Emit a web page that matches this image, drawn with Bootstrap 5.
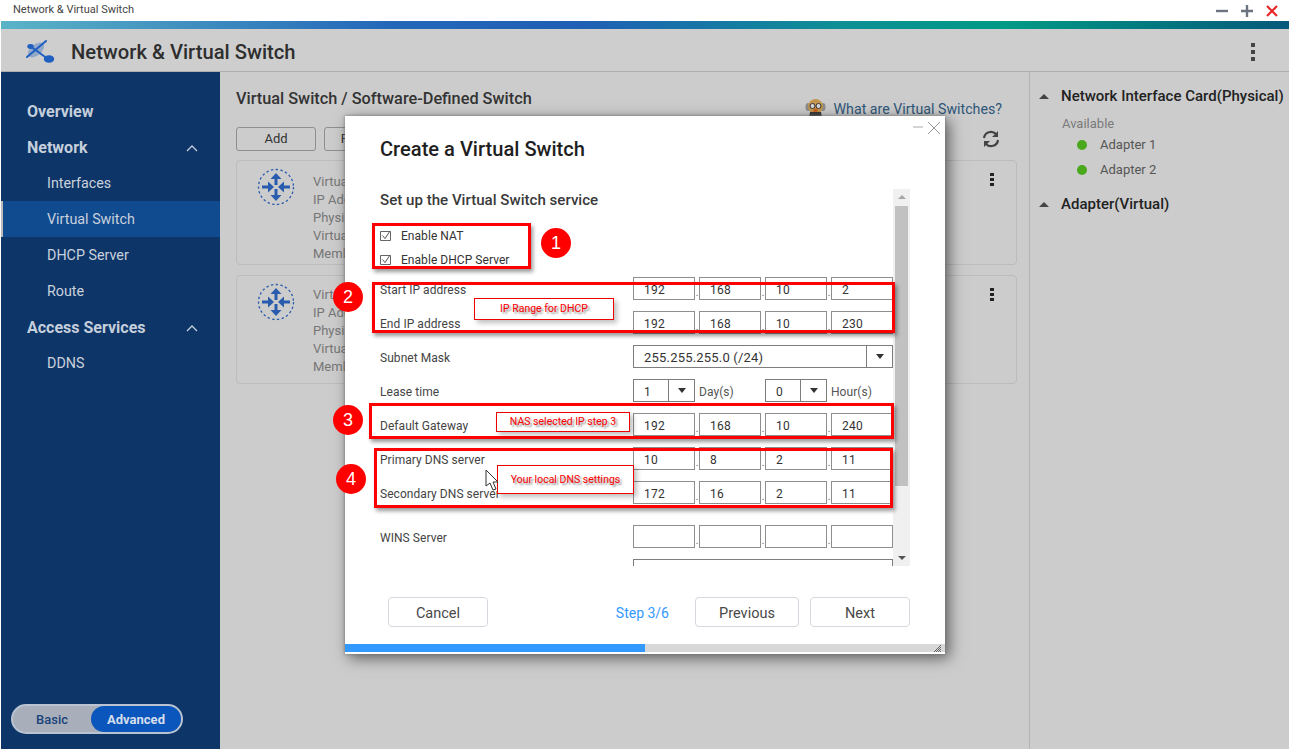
<!DOCTYPE html>
<html lang="en">
<head>
    <meta charset="UTF-8">
    <meta name="viewport" content="width=device-width, initial-scale=1.0">
    <title>Network &amp; Virtual Switch</title>
    <link href="https://cdn.jsdelivr.net/npm/bootstrap@5.3.0/dist/css/bootstrap.min.css" rel="stylesheet">
    <style>
body { font-family: Roboto, "Liberation Sans", sans-serif; background: #fff; overflow: hidden; }

/* window */
.app-window { width: 1288px; height: 749px; margin-left: 1px; position: relative; background: #ccc; }
.win-title { height: 21px; background: #fff; padding-left: 12px; font-size: 11px; color: #444; }
.win-ctrl { padding-right: 11px; gap: 13px; }
.color-strip { height: 8px; background: linear-gradient(90deg, #5ab4c6 0, #2467b9 30%, #1f5fb5 45%, #0e8f95 65%, #009a85 78%, #06597a 100%); }
.app-head { height: 43px; background: #cecece; border-bottom: 1px solid #adadad; padding-left: 25px; padding-right: 34px; padding-top: 3px; }
.app-head h1 { font-size: 20.2px; font-weight: 500; color: #2e2e2e; margin: 2px 0 0 16px; }
.app-body { height: 677px; }

/* sidebar */
.side-bar { width: 219px; background: #0d3568; padding-top: 21px; }
.side-item { height: 36px; padding-left: 26px; padding-right: 22px; font-size: 14.3px; color: #c9d1dc; display: flex; align-items: center; justify-content: space-between; }
.side-item.head { font-size: 16px; font-weight: 700; color: #c5cfdc; padding-top: 2px; }
.side-item.sub { padding-left: 46px; padding-top: 2px; }
.side-item.on { background: #104a8f; border-left: 2px solid #bbb; padding-left: 44px; }
.mode-switch { width: 172px; height: 30px; margin: 0 0 15px 10px; border-radius: 15px; background: #a9afba; border: 2px solid #b9c3d2; font-size: 13px; font-weight: 500; }
.mode-switch span { display: flex; align-items: center; justify-content: center; height: 100%; padding-top: 1px; }
.mode-basic { width: 78px; color: #1b4379; }
.mode-adv { flex: 1; background: #0a56bc; color: #d5dfed; border-radius: 15px; font-weight: 700; }

/* content */
.main-part { width: 810px; padding: 17px 12px 0 16px; border-right: 1px solid #b4b4b4; }
.main-part h2 { font-size: 16.3px; font-weight: 500; color: #333; margin: 0; line-height: 19px; }
.help-link { font-size: 14.2px; color: #2d5679; text-decoration: none; margin-right: 15px; margin-top: 10px; line-height: 18px; }
.tool-btn { width: 80px; height: 24px; border: 1px solid #8f8f8f; border-radius: 3px; font-size: 13px; color: #333; padding: 0; background: transparent; line-height: 22px; }
.sw-card { background: transparent; border: 1px solid #bcbcbc; border-radius: 4px; color: #767676; font-size: 13px; line-height: 18px; margin-bottom: 10px; padding: 7px 22px 0 20px; }
.sw-text { margin-left: 18px; padding-top: 5px; }
.sw-text.tight { padding-top: 3px; }

/* right panel */
.right-part { flex: 1; padding: 15px 0 0 9px; }
.panel-head { font-size: 15px; font-weight: 500; color: #222; line-height: 18px; white-space: nowrap; }
.tri { width: 0; height: 0; border-left: 5px solid transparent; border-right: 5px solid transparent; border-bottom: 5px solid #444; margin-right: 12px; }
.panel-note { font-size: 13px; color: #7a7a7a; margin: 11px 0 0 23px; line-height: 16px; }
.adapter { font-size: 13px; color: #555; height: 25px; padding-left: 38px; }
.adapter i { width: 10px; height: 10px; border-radius: 50%; background: #4aa81c; margin-right: 13px; }

/* dialog */
.wizard { position: absolute; left: 344px; top: 116px; width: 600px; height: 538px; background: #fff; box-shadow: 0 0 3px #777, 4px 4px 14px rgba(0,0,0,.55); display: flex; flex-direction: column; }
.wizard-ctrl { position: absolute; right: 4px; top: 5px; }
.wizard h3 { font-size: 20.1px; font-weight: 500; color: #1e1e1e; margin: 21px 0 0 35px; line-height: 24px; height: 52px; }
.scroll-wrap { height: 377px; margin-left: 35px; width: 530px; overflow: hidden; }
.form-pane { width: 513px; }
.form-pane h4 { font-size: 15.1px; font-weight: 500; color: #3a3a3a; line-height: 20px; margin: 1px 0 14px; }
.chk-row { height: 24px; font-size: 12px; color: #333; letter-spacing: .05px; }
.chk-row svg { margin-right: 10px; margin-bottom: 2px; }
.ip-row { height: 23px; margin-bottom: 11px; font-size: 12px; color: #444; letter-spacing: .05px; }
.ip-row label { width: 253px; flex: none; padding-top: 2px; }
.ip-cell { width: 62px; height: 23px; border: 1px solid #8e8e8e; border-radius: 0; padding: 2px 0 0 10px; font-size: 12px; color: #333; box-shadow: none; flex: none; letter-spacing: .2px; }
.ip-dot { width: 4px; font-size: 10px; color: #555; text-align: center; align-self: flex-end; line-height: 14px; }
.combo { height: 23px; border: 1px solid #7d7d7d; display: flex; align-items: center; font-size: 12px; color: #333; flex: none; letter-spacing: .2px; }
.combo span { flex: 1; padding: 2px 0 0 10px; }
.combo .wide-val { font-size: 13px; }
.combo b { width: 26px; height: 100%; border-left: 1px solid #7d7d7d; display: flex; align-items: center; justify-content: center; }
.combo b::after { content: ""; border-left: 4px solid transparent; border-right: 4px solid transparent; border-top: 5px solid #333; }
.unit-txt { font-size: 12px; color: #555; margin-left: 4px; padding-top: 2px; }
.fake-scroll { width: 17px; background: #f0f0f0; position: relative; flex: none; }
.fake-thumb { position: absolute; left: 2px; right: 2px; top: 17px; height: 280px; background: #c1c1c1; }
.fake-scroll::before, .fake-scroll::after { content: ""; position: absolute; left: 5px; border-left: 4px solid transparent; border-right: 4px solid transparent; }
.fake-scroll::before { top: 6px; border-bottom: 4px solid #a6a6a6; }
.fake-scroll::after { bottom: 6px; border-top: 4px solid #555; }
.wizard-foot { margin-top: 31px; padding: 0 35px 0 43px; }
.wiz-btn { height: 30px; width: 100px; font-size: 14.5px; color: #484848; border: 1px solid #d5d8de; border-radius: 4px; padding: 3px 0 0; background: #fff; }
.step-txt { font-size: 14px; color: #3399ff; margin-right: 26px; padding-top: 2px; }
.wizard .progress { height: 8px; border-radius: 0; background: #d8d8d8; margin-top: 17px; position: relative; }
.wizard .progress-bar { background: #3399ff; }
.grip { position: absolute; right: 3px; top: 0; }

/* annotations on top of the screenshot */
.note-box { position: absolute; border: 3px solid #f00; box-shadow: 2px 3px 4px rgba(0,0,0,.4); }
.note-num { position: absolute; width: 30px; height: 30px; border-radius: 50%; background: #f00; color: #fff; font-size: 18px; display: flex; align-items: center; justify-content: center; font-family: "Liberation Sans", sans-serif; }
.note-tag { position: absolute; background: #fff; border: 1px solid #e00; color: #f00; font-size: 10.5px; display: flex; align-items: center; justify-content: center; text-shadow: 2px 2px 2px rgba(0,0,0,.45); box-shadow: 3px 3px 5px rgba(0,0,0,.25); }
.mouse-ptr { position: absolute; left: 484px; top: 469px; }
    </style>
</head>
<body>

<svg width="0" height="0" class="position-absolute">
    <symbol id="routerIco" viewBox="0 0 38 38">
        <circle cx="19" cy="19" r="17.5" fill="none" stroke="#2a5cae" stroke-width="1.3" stroke-dasharray="2.4 2.4"/>
        <g fill="#2a5cae">
            <path d="M19 5l5.5 6h-4v6h-3v-6h-4zM19 33l-5.500-6h4v-6h3v6h4z"/>
            <path d="M17 19l-6-5.500v4H5v3h6v4zM21 19l6-5.500v4h6v3h-6v4z"/>
        </g>
    </symbol>
</svg>

<div class="app-window">
    <div class="win-title d-flex align-items-center justify-content-between">
        <span>Network &amp; Virtual Switch</span>
        <span class="win-ctrl d-flex align-items-center">
            <svg width="12" height="12"><path d="M0 6h12" stroke="#6b7480" stroke-width="2.4"/></svg>
            <svg width="12" height="12"><path d="M0 6h12M6 0v12" stroke="#6b7480" stroke-width="2.4"/></svg>
            <svg width="12" height="12"><path d="M1 1l10 10M11 1L1 11" stroke="#e8262a" stroke-width="2.2"/></svg>
        </span>
    </div>
    <div class="color-strip"></div>
    <div class="app-head d-flex align-items-center">
        <svg width="29" height="26" viewBox="0 0 29 26">
            <ellipse cx="10" cy="11" rx="9.500" ry="5.500" transform="rotate(-40 10 11)" fill="#92a9c9"/>
            <path d="M1 18L20 2M4 7l18 13" stroke="#1f5fc0" stroke-width="2" stroke-linecap="round"/>
            <ellipse cx="4.500" cy="7.500" rx="3.200" ry="2.400" fill="#1f5fc0"/>
            <ellipse cx="23" cy="20" rx="5.200" ry="3.800" fill="#1f5fc0"/>
        </svg>
        <h1>Network &amp; Virtual Switch</h1>
        <svg class="ms-auto" width="4" height="18"><path d="M0 0h4v4H0zM0 7h4v4H0zM0 14h4v4H0z" fill="#444"/></svg>
    </div>

    <div class="app-body d-flex">
        <div class="side-bar d-flex flex-column">
            <div class="side-item head">Overview</div>
            <div class="side-item head">Network
                <svg width="12" height="7"><path d="M1 6l5-5 5 5" fill="none" stroke="#c5cfdc" stroke-width="1.3"/></svg>
            </div>
            <div class="side-item sub">Interfaces</div>
            <div class="side-item sub on">Virtual Switch</div>
            <div class="side-item sub">DHCP Server</div>
            <div class="side-item sub">Route</div>
            <div class="side-item head">Access Services
                <svg width="12" height="7"><path d="M1 6l5-5 5 5" fill="none" stroke="#c5cfdc" stroke-width="1.3"/></svg>
            </div>
            <div class="side-item sub">DDNS</div>
            <div class="mode-switch d-flex mt-auto">
                <span class="mode-basic">Basic</span>
                <span class="mode-adv">Advanced</span>
            </div>
        </div>

        <div class="main-part">
            <div class="d-flex justify-content-between align-items-start">
                <h2>Virtual Switch / Software-Defined Switch</h2>
                <a href="#" class="help-link d-flex align-items-center">
                    <svg class="me-2" width="21" height="19" viewBox="0 0 21 19">
                        <ellipse cx="3" cy="8" rx="2.500" ry="4" fill="#8c8c8c"/>
                        <ellipse cx="18" cy="8" rx="2.500" ry="4" fill="#8c8c8c"/>
                        <ellipse cx="10.500" cy="7.500" rx="7.500" ry="7.500" fill="#c4964f"/>
                        <circle cx="7.500" cy="7" r="2.500" fill="#d8d8d8" stroke="#333"/>
                        <circle cx="13.500" cy="7" r="2.500" fill="#d8d8d8" stroke="#333"/>
                        <path d="M5 13h11l1 6H4z" fill="#3a3a3a"/>
                        <path d="M8.500 9.500h4v3.500h-4z" fill="#c9641e"/>
                    </svg>
                    What are Virtual Switches?
                </a>
            </div>
            <div class="d-flex align-items-center mt-2 mb-1" style="height:26px">
                <button class="btn tool-btn">Add</button>
                <button class="btn tool-btn ms-2">Remove</button>
                <svg class="ms-auto" style="margin-right:17px" width="18" height="18" viewBox="0 0 18 18">
                    <path d="M2 8a7 7 0 0 1 12-4M16 10a7 7 0 0 1-12 4" fill="none" stroke="#444" stroke-width="2.2"/>
                    <path d="M16 1v6h-6zM2 17v-6h6z" fill="#444"/>
                </svg>
            </div>
            <div class="card sw-card flex-row mt-2" style="height:105px">
                <svg width="38" height="38"><use href="#routerIco"/></svg>
                <div class="sw-text">Virtual Switch Name<br>IP Address<br>Physical Adapter<br>Virtual Adapter<br>Member</div>
                <svg class="ms-auto mt-1" width="4" height="14"><path d="M0 1h4v3H0zM0 6h4v3H0zM0 11h4v3H0z" fill="#222"/></svg>
            </div>
            <div class="card sw-card flex-row" style="height:109px">
                <svg width="38" height="38"><use href="#routerIco"/></svg>
                <div class="sw-text tight">Virtual Switch Name<br>IP Address<br>Physical Adapter<br>Virtual Adapter<br>Member</div>
                <svg class="ms-auto mt-1" width="4" height="14"><path d="M0 1h4v3H0zM0 6h4v3H0zM0 11h4v3H0z" fill="#222"/></svg>
            </div>
        </div>

        <div class="right-part">
            <div class="panel-head d-flex align-items-center"><span class="tri"></span>Network Interface Card(Physical)</div>
            <div class="panel-note">Available</div>
            <div class="adapter d-flex align-items-center">
                <i></i>Adapter 1</div>
            <div class="adapter d-flex align-items-center"><i></i>Adapter 2</div>
            <div class="panel-head d-flex align-items-center" style="margin-top:13px"><span class="tri"></span>Adapter(Virtual)</div>
        </div>
    </div>

    <!-- Dialog -->
    <div class="wizard">
        <svg class="wizard-ctrl" width="28" height="14">
            <path d="M0 6h10" stroke="#aaa"/>
            <path d="M15 1l12 12M27 1L15 13" stroke="#999"/>
        </svg>
        <h3>Create a Virtual Switch</h3>
        <div class="scroll-wrap d-flex">
            <div class="form-pane">
                <h4>Set up the Virtual Switch service</h4>
                <div class="chk-row d-flex align-items-center">
                    <svg width="11" height="11"><path d="M.5 1.500h10v9H.5z" fill="none" stroke="#666"/><path d="M2.500 5.500l2.500 3L10 1" fill="none" stroke="#555"/></svg>Enable NAT
                </div>
                <div class="chk-row d-flex align-items-center" style="margin-bottom:5px">
                    <svg width="11" height="11"><path d="M.5 1.500h10v9H.5z" fill="none" stroke="#666"/><path d="M2.500 5.500l2.500 3L10 1" fill="none" stroke="#555"/></svg>Enable DHCP Server
                </div>
                <div class="ip-row d-flex align-items-center">
                    <label>Start IP address</label>
                    <input class="form-control ip-cell" value="192"><span class="ip-dot">.</span><input class="form-control ip-cell" value="168"><span class="ip-dot">.</span><input class="form-control ip-cell" value="10"><span class="ip-dot">.</span><input class="form-control ip-cell" value="2">
                </div>
                <div class="ip-row d-flex align-items-center">
                    <label>End IP address</label>
                    <input class="form-control ip-cell" value="192"><span class="ip-dot">.</span><input class="form-control ip-cell" value="168"><span class="ip-dot">.</span><input class="form-control ip-cell" value="10"><span class="ip-dot">.</span><input class="form-control ip-cell" value="230">
                </div>
                <div class="ip-row d-flex align-items-center">
                    <label>Subnet Mask</label>
                    <div class="combo" style="width:260px"><span class="wide-val">255.255.255.0 (/24)</span><b></b></div>
                </div>
                <div class="ip-row d-flex align-items-center">
                    <label>Lease time</label>
                    <div class="combo" style="width:62px"><span>1</span><b></b></div>
                    <span class="unit-txt" style="width:62px;margin-right:4px">Day(s)</span>
                    <div class="combo" style="width:62px"><span>0</span><b></b></div>
                    <span class="unit-txt">Hour(s)</span>
                </div>
                <div class="ip-row d-flex align-items-center">
                    <label>Default Gateway</label>
                    <input class="form-control ip-cell" value="192"><span class="ip-dot">.</span><input class="form-control ip-cell" value="168"><span class="ip-dot">.</span><input class="form-control ip-cell" value="10"><span class="ip-dot">.</span><input class="form-control ip-cell" value="240">
                </div>
                <div class="ip-row d-flex align-items-center">
                    <label>Primary DNS server</label>
                    <input class="form-control ip-cell" value="10"><span class="ip-dot">.</span><input class="form-control ip-cell" value="8"><span class="ip-dot">.</span><input class="form-control ip-cell" value="2"><span class="ip-dot">.</span><input class="form-control ip-cell" value="11">
                </div>
                <div class="ip-row d-flex align-items-center" style="margin-bottom:21px">
                    <label>Secondary DNS server</label>
                    <input class="form-control ip-cell" value="172"><span class="ip-dot">.</span><input class="form-control ip-cell" value="16"><span class="ip-dot">.</span><input class="form-control ip-cell" value="2"><span class="ip-dot">.</span><input class="form-control ip-cell" value="11">
                </div>
                <div class="ip-row d-flex align-items-center">
                    <label>WINS Server</label>
                    <input class="form-control ip-cell"><span class="ip-dot">.</span><input class="form-control ip-cell"><span class="ip-dot">.</span><input class="form-control ip-cell"><span class="ip-dot">.</span><input class="form-control ip-cell">
                </div>
                <div class="ip-row d-flex align-items-center">
                    <label></label>
                    <div class="combo" style="width:260px"></div>
                </div>
            </div>
            <div class="fake-scroll"><div class="fake-thumb"></div></div>
        </div>
        <div class="wizard-foot d-flex align-items-center">
            <button class="btn wiz-btn">Cancel</button>
            <span class="step-txt ms-auto">Step 3/6</span>
            <button class="btn wiz-btn" style="width:104px">Previous</button>
            <button class="btn wiz-btn" style="margin-left:11px">Next</button>
        </div>
        <div class="progress">
            <div class="progress-bar" style="width:50%"></div>
            <svg class="grip" width="10" height="8"><path d="M9 1L2 8M9 3L4 8M9 5L6 8M9 7L8 8" stroke="#666"/></svg>
        </div>
    </div>

    <!-- Red annotations -->
    <div class="note-box" style="left:371px;top:223px;width:159px;height:46px"></div>
    <div class="note-box" style="left:371px;top:282px;width:523px;height:51px"></div>
    <div class="note-box" style="left:368px;top:403px;width:525px;height:36px"></div>
    <div class="note-box" style="left:373px;top:448px;width:519px;height:60px"></div>
    <div class="note-num" style="left:540px;top:228px">1</div>
    <div class="note-num" style="left:332px;top:282px">2</div>
    <div class="note-num" style="left:332px;top:405px">3</div>
    <div class="note-num" style="left:335px;top:464px">4</div>
    <div class="note-tag" style="left:473px;top:298px;width:140px;height:22px">IP Range for DHCP</div>
    <div class="note-tag" style="left:495px;top:412px;width:134px;height:20px">NAS selected IP step 3</div>
    <div class="note-tag" style="left:496px;top:465px;width:137px;height:29px">Your local DNS settings</div>
    <svg class="mouse-ptr" width="14" height="22" viewBox="0 0 14 22">
        <path d="M1 1v16l4-3 3 7 3-1-3-7h5z" fill="#fff" stroke="#333"/>
    </svg>
</div>

<script src="https://cdn.jsdelivr.net/npm/bootstrap@5.3.0/dist/js/bootstrap.bundle.min.js"></script>
</body>
</html>
